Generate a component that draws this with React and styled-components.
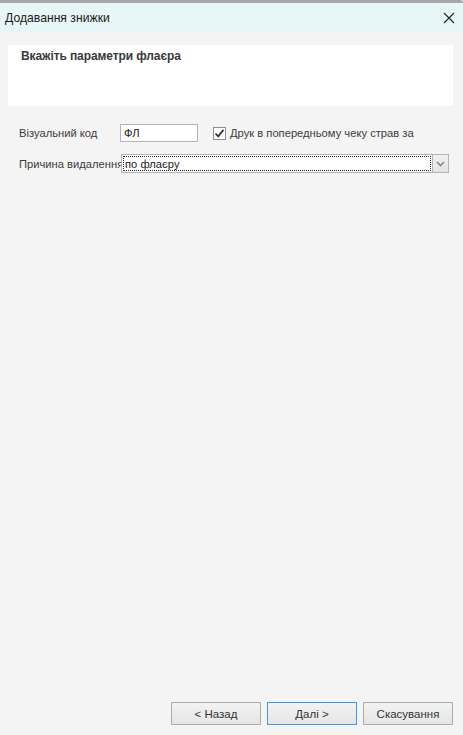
import React from 'react';
import styled, { createGlobalStyle } from 'styled-components';

const GlobalStyle = createGlobalStyle`
  html, body {
    margin: 0;
    padding: 0;
    height: 100%;
    background: #f4f4f4;
  }
  #root {
    height: 100%;
  }
`;

const Window = styled.div`
  display: flex;
  flex-direction: column;
  height: 735px;
  border-top: 3px solid #a7a7a7;
  border-top-right-radius: 3px;
  background: #f4f4f4;
  font-family: 'Liberation Sans', Arial, sans-serif;
  font-size: 11.2px;
  color: #333;
  box-sizing: border-box;
`;

const TitleBar = styled.div`
  display: flex;
  align-items: center;
  justify-content: space-between;
  height: 30px;
  padding: 0 6px 0 5px;
  background: #e7f6f7;
  flex-shrink: 0;
`;

const Title = styled.span`
  font-size: 12.2px;
  color: #1b1b1b;
`;

const CloseButton = styled.button`
  display: flex;
  align-items: center;
  justify-content: center;
  width: 16px;
  height: 16px;
  padding: 0;
  border: none;
  background: none;
`;

const Body = styled.div`
  flex: 1;
  display: flex;
  flex-direction: column;
  padding: 12px 10px 10px 8px;
`;

const Header = styled.div`
  height: 61px;
  background: #fff;
  padding: 4px 13px;
  box-sizing: border-box;
`;

const HeaderText = styled.div`
  font-size: 12px;
  font-weight: bold;
  color: #3a3a3a;
  letter-spacing: -0.1px;
`;

const Form = styled.div`
  display: flex;
  flex-direction: column;
  gap: 12px;
  padding: 18px 4px 0 11px;
  flex: 1;
`;

const Row = styled.div`
  display: flex;
  align-items: center;
`;

const Label = styled.span`
  width: ${p => p.width}px;
  flex-shrink: 0;
  color: #3b3b3b;
  white-space: nowrap;
`;

const TextBox = styled.div`
  width: 78px;
  height: 18px;
  box-sizing: border-box;
  border: 1px solid #b4b4b4;
  background: #fff;
  padding: 0 3px;
  display: flex;
  align-items: center;
  color: #222;
`;

const CheckRow = styled.label`
  display: flex;
  align-items: center;
  gap: 4px;
  margin-left: 15px;
  color: #3b3b3b;
`;

const CheckBox = styled.span`
  width: 13px;
  height: 13px;
  box-sizing: border-box;
  border: 1px solid #8f8f8f;
  background: #fff;
  display: flex;
  align-items: center;
  justify-content: center;
`;

const Select = styled.div`
  flex: 1;
  height: 19px;
  box-sizing: border-box;
  border: 1px solid #b4b4b4;
  background: #fff;
  display: flex;
  margin-left: 1px;
`;

const SelectValue = styled.div`
  flex: 1;
  margin: 1px;
  border: 1px dotted #333;
  display: flex;
  align-items: center;
  padding-left: 1px;
  color: #222;
`;

const SelectArrow = styled.div`
  width: 15px;
  border-left: 1px solid #b4b4b4;
  background: linear-gradient(#f0f0f0, #e4e4e4);
  display: flex;
  align-items: center;
  justify-content: center;
`;

const Footer = styled.div`
  display: flex;
  justify-content: flex-end;
  gap: 6px;
`;

const Button = styled.button`
  width: 90px;
  height: 23px;
  box-sizing: border-box;
  border: 1px solid ${p => (p.primary ? '#3d98f2' : '#adadad')};
  background: linear-gradient(#f2f2f2, #e6e6e6);
  font-family: inherit;
  font-size: 11.5px;
  color: #333;
  padding: 0;
`;

export default function App() {
  return (
    <>
      <GlobalStyle />
      <Window>
        <TitleBar>
          <Title>Додавання знижки</Title>
          <CloseButton>
            <svg width="12" height="12" viewBox="0 0 12 12">
              <path d="M1 1 L11 11 M11 1 L1 11" stroke="#222" strokeWidth="1.1" />
            </svg>
          </CloseButton>
        </TitleBar>
        <Body>
          <Header>
            <HeaderText>Вкажіть параметри флаєра</HeaderText>
          </Header>
          <Form>
            <Row>
              <Label width={101}>Візуальний код</Label>
              <TextBox>ФЛ</TextBox>
              <CheckRow>
                <CheckBox>
                  <svg width="11" height="11" viewBox="0 0 11 11">
                    <path d="M1.5 5.5 L4.2 8.3 L9.5 1.8" fill="none" stroke="#333" strokeWidth="1.8" />
                  </svg>
                </CheckBox>
                Друк в попередньому чеку страв за
              </CheckRow>
            </Row>
            <Row>
              <Label width={101}>Причина видалення</Label>
              <Select>
                <SelectValue>по флаєру</SelectValue>
                <SelectArrow>
                  <svg width="9" height="6" viewBox="0 0 9 6">
                    <path d="M1 1 L4.5 4.5 L8 1" fill="none" stroke="#8a8a8a" strokeWidth="1.6" />
                  </svg>
                </SelectArrow>
              </Select>
            </Row>
          </Form>
          <Footer>
            <Button>&lt; Назад</Button>
            <Button primary>Далі &gt;</Button>
            <Button>Скасування</Button>
          </Footer>
        </Body>
      </Window>
    </>
  );
}
